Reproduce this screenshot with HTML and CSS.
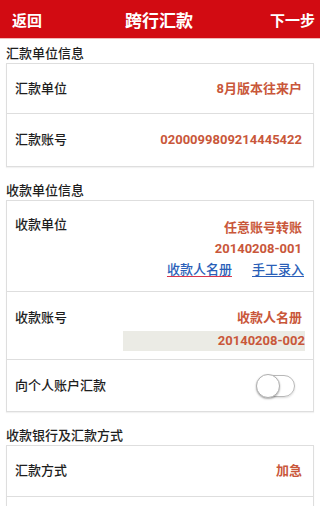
FILE: index.html
```html
<!DOCTYPE html>
<html lang="zh-CN">
<head>
    <meta charset="UTF-8">
    <meta name="viewport" content="width=device-width, initial-scale=1.0">
    <title>跨行汇款</title>
    <link rel="stylesheet" href="styles.css">
</head>
<body>
    <div class="top-bar">
        <span class="top-btn">返回</span>
        <span class="top-title">跨行汇款</span>
        <span class="top-btn">下一步</span>
    </div>

    <div class="content">
        <div class="section-title">汇款单位信息</div>
        <div class="card">
            <div class="row row-payer">
                <span class="label">汇款单位</span>
                <span class="value">8月版本往来户</span>
            </div>
            <div class="row row-account">
                <span class="label">汇款账号</span>
                <span class="value">0200099809214445422</span>
            </div>
        </div>

        <div class="section-title">收款单位信息</div>
        <div class="card">
            <div class="row row-top row-payee">
                <span class="label">收款单位</span>
                <div class="value-stack">
                    <span class="value">任意账号转账</span>
                    <span class="value">20140208-001</span>
                    <div class="links">
                        <a class="link link-book" href="#">收款人名册</a>
                        <a class="link" href="#">手工录入</a>
                    </div>
                </div>
            </div>
            <div class="row row-top row-payee-account">
                <span class="label">收款账号</span>
                <div class="value-stack">
                    <span class="value">收款人名册</span>
                    <span class="value value-box">20140208-002</span>
                </div>
            </div>
            <div class="row row-switch">
                <span class="label">向个人账户汇款</span>
                <span class="switch"><span class="knob"></span></span>
            </div>
        </div>

        <div class="section-title">收款银行及汇款方式</div>
        <div class="card">
            <div class="row row-method">
                <span class="label">汇款方式</span>
                <span class="value">加急</span>
            </div>
            <div class="row row-method"></div>
        </div>
    </div>
</body>
</html>
```

FILE: styles.css
```css
:root {
    --bar-color: #d20b12;
    --text-color: #1e1e1e;
    --value-color: #c9573a;
    --link-color: #2b5fb8;
    --border-color: #dedede;
}

body, html {
    margin: 0;
    padding: 0;
    background-color: #ffffff;
    font-family: Roboto, "Noto Sans CJK SC", sans-serif;
    color: var(--text-color);
    height: 506px;
    overflow: hidden;
}

.top-bar {
    height: 38px;
    background-color: var(--bar-color);
    border-bottom: 1px solid #f2b9b9;
    display: flex;
    align-items: center;
    justify-content: space-between;
    padding: 0 5px 0 12px;
    color: #ffffff;
    font-weight: bold;
}

.top-btn {
    font-size: 15px;
}

.top-title {
    font-size: 17px;
    margin-left: 6px;
}

.content {
    padding: 0 6px;
}

.section-title {
    font-size: 13px;
    font-weight: 500;
    line-height: 16px;
    padding: 7px 0 1px 0;
}

.card + .section-title {
    padding-top: 16px;
}

.card {
    border: 1px solid var(--border-color);
    box-shadow: 0 1px 1px rgba(0, 0, 0, 0.05);
}

.row {
    display: flex;
    justify-content: space-between;
    align-items: center;
    padding: 0 11px 0 8px;
    border-bottom: 1px solid var(--border-color);
    box-sizing: border-box;
}

.row:last-child {
    border-bottom: none;
}

.row-top {
    align-items: flex-start;
}

.row-payer { height: 50px; }
.row-account { height: 52px; }
.row-payee { height: 91px; padding-top: 15px; }
.row-payee-account { height: 68px; padding-top: 17px; padding-right: 8px; }
.row-switch { height: 51px; padding-right: 18px; }
.row-method { height: 51px; }

.label {
    font-size: 13px;
    font-weight: 500;
    line-height: 18px;
}

.value {
    font-size: 13px;
    font-weight: bold;
    color: var(--value-color);
    line-height: 18px;
}

.value-stack {
    display: flex;
    flex-direction: column;
    align-items: flex-end;
}

.row-payee .value-stack .value {
    margin-top: 3px;
}

.row-payee .value-stack .value + .value {
    margin-top: 3px;
}

.row-payee-account .value-stack .value:first-child {
    margin-right: 3px;
}

.value-box {
    margin-top: 4px;
    width: 182px;
    text-align: right;
    background-color: #ebebe5;
    padding: 1px 0;
}

.links {
    display: flex;
    gap: 20px;
    margin-top: 3px;
    margin-right: -2px;
}

.link {
    font-size: 13px;
    font-weight: 500;
    color: var(--link-color);
    text-decoration: underline;
    text-decoration-thickness: 1px;
    text-underline-offset: 2px;
    line-height: 18px;
}

.link-book {
    text-decoration-color: #d8364d;
}

.switch {
    width: 36px;
    height: 20px;
    border: 1px solid #b8b8b8;
    border-radius: 11px;
    position: relative;
    box-shadow: 0 1px 2px rgba(0, 0, 0, 0.15);
}

.knob {
    position: absolute;
    left: -2px;
    top: -2px;
    width: 22px;
    height: 22px;
    border-radius: 50%;
    background-color: #ffffff;
    border: 1px solid #b0b0b0;
    box-shadow: 0 1px 2px rgba(0, 0, 0, 0.3);
}
```
